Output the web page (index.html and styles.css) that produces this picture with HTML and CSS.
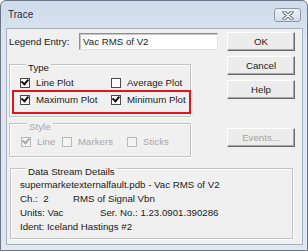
FILE: index.html
```html
<html lang="en"><head>
  <meta charset="UTF-8">
  <title>Trace</title>
  <link rel="stylesheet" href="styles.css">
</head>
<body>
  <div class="window">
    <div class="titlebar">
      <span class="title">Trace</span>
      <div class="close-btn">
        <svg width="12" height="9" viewBox="0 0 12 9">
          <path d="M2 1 L10 8 M10 1 L2 8" stroke="#5e6b7d" stroke-width="3.2" stroke-linecap="round"/>
          <path d="M2 1 L10 8 M10 1 L2 8" stroke="#ffffff" stroke-width="1.4" stroke-linecap="round"/>
        </svg>
      </div>
    </div>

    <div class="client">
      <div class="top">
        <div class="left-col">
          <div class="legend-row">
            <span class="label">Legend Entry:</span>
            <div class="textbox">Vac RMS of V2</div>
          </div>

          <div class="group type-group">
            <div class="group-title">Type</div>
            <div class="check-grid">
              <div class="check"><span class="box checked"></span>Line Plot</div>
              <div class="check"><span class="box"></span>Average Plot</div>
              <div class="check"><span class="box checked"></span>Maximum Plot</div>
              <div class="check"><span class="box checked"></span>Minimum Plot</div>
            </div>
          </div>

          <div class="group style-group disabled">
            <div class="group-title">Style</div>
            <div class="check-row">
              <div class="check c-line"><span class="box checked"></span>Line</div>
              <div class="check c-markers"><span class="box"></span>Markers</div>
              <div class="check"><span class="box"></span>Sticks</div>
            </div>
          </div>
        </div>

        <div class="right-col">
          <div class="btn">OK</div>
          <div class="btn">Cancel</div>
          <div class="btn">Help</div>
          <div class="btn btn-disabled events">Events...</div>
        </div>
      </div>

      <div class="group details">
        <div class="group-title">Data Stream Details</div>
        <div class="line">supermarketexternalfault.pdb - Vac RMS of V2</div>
        <div class="line"><span class="col-a">Ch.:&nbsp; 2</span>RMS of Signal Vbn</div>
        <div class="line"><span class="col-b">Units: Vac</span>Ser. No.: 1.23.0901.390286</div>
        <div class="line">Ident: Iceland Hastings #2</div>
      </div>

      <!-- red annotation box -->
      <div class="highlight"></div>
    </div>
  </div>
</body></html>
```

FILE: styles.css
```css
body {
  margin: 0;
  background: #ffffff;
  font-family: "Liberation Sans", Arial, sans-serif;
  font-size: 9.7px;
  color: #1a1a1a;
}

.window {
  width: 306px;
  height: 249px;
  border: 1px solid #6a7686;
  border-radius: 6px 6px 0 0;
  background: linear-gradient(#cfdbeb, #dce5f0 40px, #dfe7f1);
  display: flex;
  flex-direction: column;
}

.titlebar {
  height: 27px;
  display: flex;
  align-items: flex-start;
  justify-content: space-between;
  padding: 0 6px 0 7px;
}
.title {
  margin-top: 8px;
  font-size: 10px;
  color: #1e2b3c;
}
.close-btn {
  margin-top: 7px;
  width: 25px;
  height: 12px;
  border: 1px solid #8c98a9;
  border-radius: 3px;
  background: linear-gradient(#eef2f7, #d3dce8);
  display: flex;
  justify-content: center;
  align-items: center;
}

.client {
  position: relative;
  flex: 1;
  margin: 0 4px 5px 5px;
  border: 1px solid #a5b2c2;
  background: #f0f0f0;
  padding: 3px 0 0 2px;
}

.top {
  display: flex;
}
.left-col {
  width: 182px;
}
.right-col {
  margin-left: 36px;
  display: flex;
  flex-direction: column;
  gap: 5px;
}

.legend-row {
  display: flex;
  align-items: center;
  margin-top: 1px;
  height: 17px;
}
.label {
  width: 70px;
  flex-shrink: 0;
  white-space: nowrap;
}
.textbox {
  width: 134px;
  flex-shrink: 0;
  height: 15px;
  line-height: 15px;
  padding-left: 3px;
  white-space: nowrap;
  background: #ffffff;
  border: 1px solid;
  border-color: #8e8f8f #e3e3e3 #e3e3e3 #8e8f8f;
  box-shadow: inset 1px 1px 0 #c8c8c8;
}

.btn {
  width: 66px;
  height: 17px;
  line-height: 17px;
  text-align: center;
  background: #ececec;
  border: 1px solid;
  border-color: #ffffff #6a6a6a #6a6a6a #ffffff;
  box-shadow: inset -1px -1px 0 #a8a8a8;
}
.btn-disabled {
  color: #a3a3a3;
}
.events {
  margin-top: 24px;
}

.group {
  border: 1px solid #c4c4c4;
  box-shadow: 1px 1px 0 #ffffff, inset 1px 1px 0 #ffffff;
}
.group-title {
  display: table;
  margin: -7px 0 0 6px;
  padding: 0 2px;
  line-height: 12px;
  background: #f0f0f0;
}
.disabled .group-title,
.disabled .check {
  color: #a8a8a8;
}

.type-group {
  margin-top: 14px;
  padding: 4px 0 8px 10px;
}
.check-grid {
  display: grid;
  grid-template-columns: 91px auto;
  grid-auto-rows: 17px;
}
.check {
  display: flex;
  align-items: center;
  white-space: nowrap;
}
.box {
  width: 8px;
  height: 8px;
  margin-right: 6px;
  border: 1px solid #4a4a4a;
  background: #ffffff;
  position: relative;
}
.box.checked::after {
  content: "";
  position: absolute;
  left: 1px;
  top: 0px;
  width: 5px;
  height: 3px;
  border-left: 2px solid #111;
  border-bottom: 2px solid #111;
  transform: rotate(-50deg);
  transform-origin: 3px 3px;
}
.disabled .box {
  border-color: #b9b9b9;
  background: #f4f4f4;
}
.disabled .box.checked::after {
  border-color: #a9a9a9;
}

.style-group {
  margin-top: 6px;
  padding: 4px 0 6px 11px;
}
.check-row {
  display: flex;
  height: 17px;
}
.c-line {
  width: 41px;
}
.c-markers {
  width: 65px;
}

.details {
  margin: 11px 9px 0 1px;
  padding: 4px 0 4px 9px;
}
.line {
  line-height: 14px;
  white-space: nowrap;
}
.col-a {
  display: inline-block;
  width: 53px;
}
.col-b {
  display: inline-block;
  width: 80px;
}

.highlight {
  position: absolute;
  left: 5px;
  top: 61px;
  width: 175px;
  height: 20px;
  border: 2px solid #e4141c;
}
```
